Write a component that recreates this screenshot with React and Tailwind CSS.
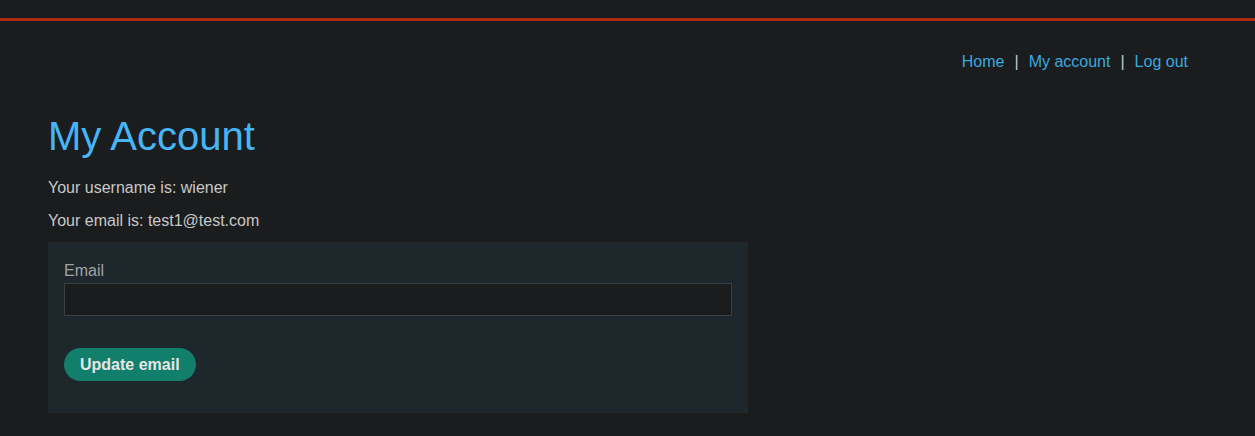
export default function App() {
  return (
    <div className="min-h-[436px] bg-[#1b1c1e] font-['Liberation_Sans',Arial,sans-serif] text-[16px]">
      <div className="pt-[18px]">
        <div className="h-[3px] bg-[#ae2a0c]" />
      </div>
      <nav className="mt-[29px] flex justify-end pr-[67px] leading-[24px] gap-[10px]">
        <a className="text-[#3aa9de]" href="#">Home</a>
        <span className="text-[#c8c8c8]">|</span>
        <a className="text-[#3aa9de]" href="#">My account</a>
        <span className="text-[#c8c8c8]">|</span>
        <a className="text-[#3aa9de]" href="#">Log out</a>
      </nav>
      <main className="px-[48px] pt-[40px]">
        <h1 className="text-[40px] leading-[45px] text-[#45b5f7]">My Account</h1>
        <p className="mt-[20px] leading-[18px] text-[#c8c8c8]">Your username is: wiener</p>
        <p className="mt-[15px] leading-[18px] text-[#c8c8c8]">Your email is: test1@test.com</p>
        <form className="mt-[12px] w-[700px] bg-[#1d272c] px-[16px] pt-[17px] pb-[32px]">
          <label className="block leading-[24px] text-[#a3a3a3]">Email</label>
          <input
            type="email"
            className="block h-[33px] w-full border border-[#3e3f41] bg-[#1b1c1e] text-[#c8c8c8] outline-none"
          />
          <button
            type="button"
            className="mt-[32px] h-[33px] rounded-full bg-[#117f6b] px-[16px] font-bold text-[#e6e6e6]"
          >
            Update email
          </button>
        </form>
      </main>
    </div>
  );
}
